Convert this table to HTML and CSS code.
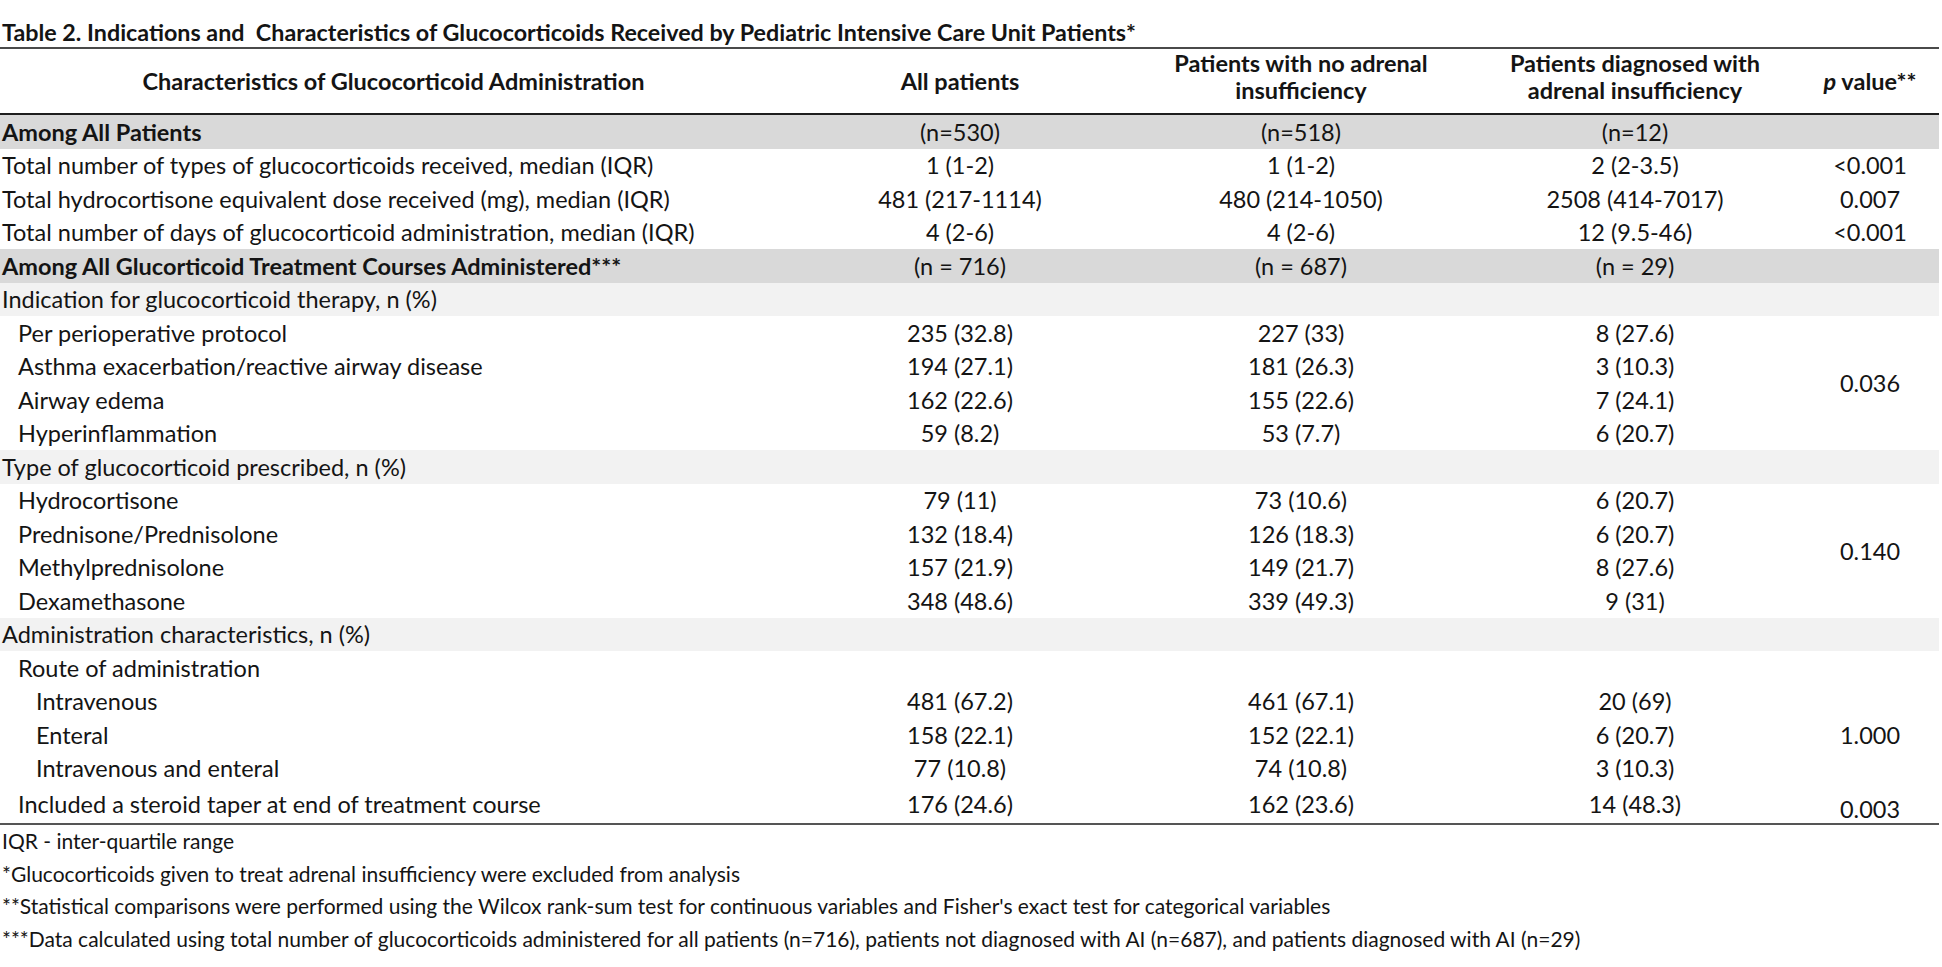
FILE: index.html
```html
<!DOCTYPE html>
<html lang="en">
<head>
<meta charset="utf-8">
<title>Table 2</title>
<link rel="stylesheet" href="styles.css">
</head>
<body>
<div class="page">
  <div class="caption">Table 2. Indications and&nbsp; Characteristics of Glucocorticoids Received by Pediatric Intensive Care Unit Patients*</div>
  <table class="tbl">
    <colgroup>
      <col class="c1"><col class="c2"><col class="c3"><col class="c4"><col class="c5">
    </colgroup>
    <thead>
      <tr>
        <th>Characteristics of Glucocorticoid Administration</th>
        <th>All patients</th>
        <th class="two">Patients with no adrenal<br>insufficiency</th>
        <th class="two">Patients diagnosed with<br>adrenal insufficiency</th>
        <th><i>p</i> value**</th>
      </tr>
    </thead>
    <tbody>
      <tr class="section"><td>Among All Patients</td><td>(n=530)</td><td>(n=518)</td><td>(n=12)</td><td></td></tr>
      <tr><td>Total number of types of glucocorticoids received, median (IQR)</td><td>1 (1-2)</td><td>1 (1-2)</td><td>2 (2-3.5)</td><td>&lt;0.001</td></tr>
      <tr><td>Total hydrocortisone equivalent dose received (mg), median (IQR)</td><td>481 (217-1114)</td><td>480 (214-1050)</td><td>2508 (414-7017)</td><td>0.007</td></tr>
      <tr><td>Total number of days of glucocorticoid administration, median (IQR)</td><td>4 (2-6)</td><td>4 (2-6)</td><td>12 (9.5-46)</td><td>&lt;0.001</td></tr>
      <tr class="section"><td>Among All Glucorticoid Treatment Courses Administered***</td><td>(n = 716)</td><td>(n = 687)</td><td>(n = 29)</td><td></td></tr>
      <tr class="group"><td>Indication for glucocorticoid therapy, n (%)</td><td></td><td></td><td></td><td></td></tr>
      <tr><td class="ind1">Per perioperative protocol</td><td>235 (32.8)</td><td>227 (33)</td><td>8 (27.6)</td><td rowspan="4">0.036</td></tr>
      <tr><td class="ind1">Asthma exacerbation/reactive airway disease</td><td>194 (27.1)</td><td>181 (26.3)</td><td>3 (10.3)</td></tr>
      <tr><td class="ind1">Airway edema</td><td>162 (22.6)</td><td>155 (22.6)</td><td>7 (24.1)</td></tr>
      <tr><td class="ind1">Hyperinflammation</td><td>59 (8.2)</td><td>53 (7.7)</td><td>6 (20.7)</td></tr>
      <tr class="group"><td>Type of glucocorticoid prescribed, n (%)</td><td></td><td></td><td></td><td></td></tr>
      <tr><td class="ind1">Hydrocortisone</td><td>79 (11)</td><td>73 (10.6)</td><td>6 (20.7)</td><td rowspan="4">0.140</td></tr>
      <tr><td class="ind1">Prednisone/Prednisolone</td><td>132 (18.4)</td><td>126 (18.3)</td><td>6 (20.7)</td></tr>
      <tr><td class="ind1">Methylprednisolone</td><td>157 (21.9)</td><td>149 (21.7)</td><td>8 (27.6)</td></tr>
      <tr><td class="ind1">Dexamethasone</td><td>348 (48.6)</td><td>339 (49.3)</td><td>9 (31)</td></tr>
      <tr class="group"><td>Administration characteristics, n (%)</td><td></td><td></td><td></td><td></td></tr>
      <tr><td class="ind1">Route of administration</td><td></td><td></td><td></td><td></td></tr>
      <tr><td class="ind2">Intravenous</td><td>481 (67.2)</td><td>461 (67.1)</td><td>20 (69)</td><td rowspan="3">1.000</td></tr>
      <tr><td class="ind2">Enteral</td><td>158 (22.1)</td><td>152 (22.1)</td><td>6 (20.7)</td></tr>
      <tr><td class="ind2">Intravenous and enteral</td><td>77 (10.8)</td><td>74 (10.8)</td><td>3 (10.3)</td></tr>
      <tr><td class="ind1">Included a steroid taper at end of treatment course</td><td>176 (24.6)</td><td>162 (23.6)</td><td>14 (48.3)</td><td class="low">0.003</td></tr>
    </tbody>
  </table>
  <div class="notes">
    <p>IQR - inter-quartile range</p>
    <p>*Glucocorticoids given to treat adrenal insufficiency were excluded from analysis</p>
    <p>**Statistical comparisons were performed using the Wilcox rank-sum test for continuous variables and Fisher's exact test for categorical variables</p>
    <p>***Data calculated using total number of glucocorticoids administered for all patients (n=716), patients not diagnosed with AI (n=687), and patients diagnosed with AI (n=29)</p>
  </div>
</div>
</body>
</html>
```

FILE: styles.css
```css
html, body {
  margin: 0;
  padding: 0;
  background: #ffffff;
}
body {
  font-family: Lato, "Liberation Sans", sans-serif;
  color: #141414;
}
.page {
  width: 1939px;
  padding-top: 18px;
}
.caption {
  font-weight: 700;
  font-size: 23.3px;
  line-height: 28px;
  padding-left: 2px;
  padding-bottom: 1px;
  white-space: nowrap;
}
.tbl {
  width: 1939px;
  border-collapse: collapse;
  table-layout: fixed;
  font-size: 23.5px;
  border-top: 2px solid #4a4a4a;
  border-bottom: 2px solid #555555;
}
.c1 { width: 787px; }
.c2 { width: 346px; }
.c3 { width: 336px; }
.c4 { width: 332px; }
.c5 { width: 138px; }
.tbl th {
  font-weight: 700;
  line-height: 29px;
  height: 64px;
  padding: 0;
  text-align: center;
  vertical-align: middle;
  border-bottom: 2px solid #1e1e1e;
  white-space: nowrap;
}
.tbl th.two {
  vertical-align: top;
  line-height: 27px;
  padding-top: 1px;
  height: 63px;
}
.tbl td {
  height: 33.5px;
  padding: 0;
  line-height: 28px;
  text-align: center;
  vertical-align: middle;
  white-space: nowrap;
}
.tbl td:first-child {
  text-align: left;
  padding-left: 2px;
}
.tbl td.ind1 { padding-left: 18px; }
.tbl td.ind2 { padding-left: 36px; }
.tbl td.low {
  padding-top: 10px;
  height: 23.5px;
}
.section td {
  background: #d9d9d9;
}
.section td:first-child { font-weight: 700; }
.group td {
  background: #f2f2f2;
}
.notes {
  padding-top: 0;
}
.notes p {
  margin: 0;
  font-size: 21px;
  line-height: 32.6px;
  padding-left: 2px;
  white-space: nowrap;
}
```
